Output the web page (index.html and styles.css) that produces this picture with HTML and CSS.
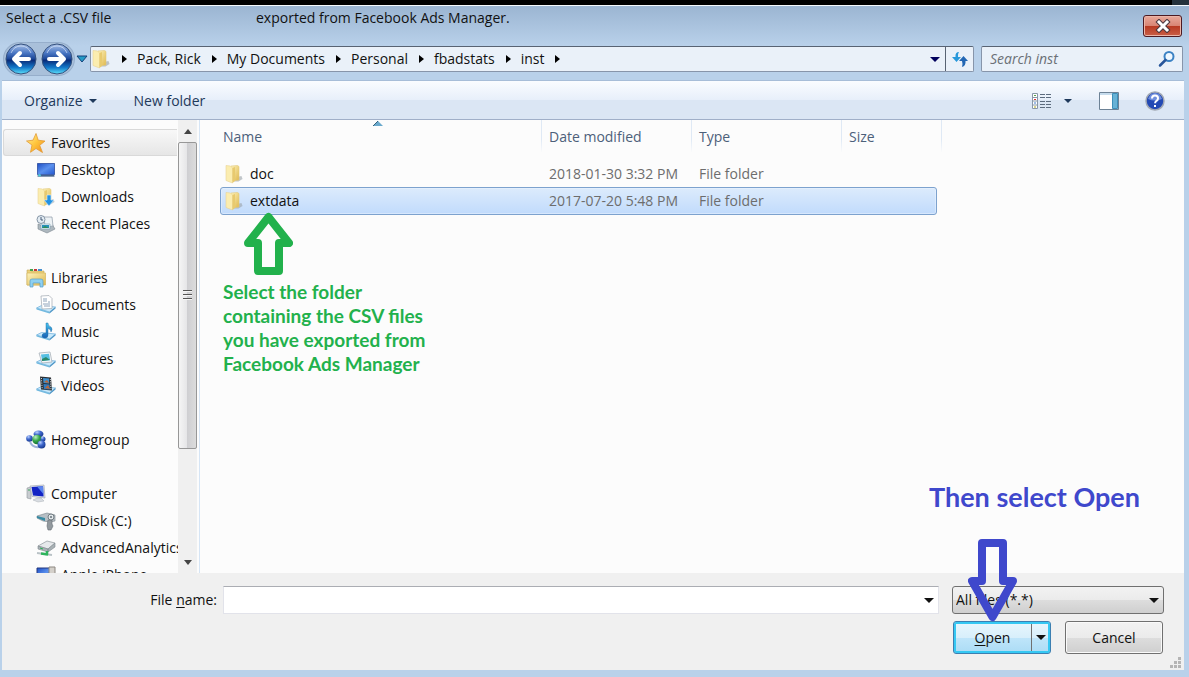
FILE: index.html
```html
<!DOCTYPE html>
<html lang="en">
<head>
<meta charset="utf-8">
<title>Select a .CSV file</title>
<link rel="stylesheet" href="styles.css">
</head>
<body>
<svg class="defs" aria-hidden="true">
  <defs>
    <linearGradient id="gold" x1="0" x2="1" y1="0" y2="1"><stop offset="0" stop-color="#fdf3bd"/><stop offset="1" stop-color="#dfb84e"/></linearGradient>
    <linearGradient id="orb" x1="0" x2="0" y1="0" y2="1"><stop offset="0" stop-color="#a9c1e6"/><stop offset=".3" stop-color="#4a77c4"/><stop offset=".5" stop-color="#1b4595"/><stop offset=".54" stop-color="#082a78"/><stop offset=".78" stop-color="#1377c8"/><stop offset="1" stop-color="#5ee3fb"/></linearGradient>
    <linearGradient id="screen" x1="0" x2="1" y1="0" y2="1"><stop offset="0" stop-color="#1e4ec4"/><stop offset=".5" stop-color="#5b91ee"/><stop offset="1" stop-color="#2458cf"/></linearGradient>
    <linearGradient id="aqua" x1="0" x2="0" y1="0" y2="1"><stop offset="0" stop-color="#49c4ee"/><stop offset="1" stop-color="#1660b4"/></linearGradient>
    <radialGradient id="ball" cx=".35" cy=".25" r=".8"><stop offset="0" stop-color="#b9d0ff"/><stop offset=".45" stop-color="#3f68cc"/><stop offset="1" stop-color="#153589"/></radialGradient>
    <radialGradient id="leaf" cx=".35" cy=".25" r=".8"><stop offset="0" stop-color="#b9f0c0"/><stop offset=".5" stop-color="#35a64a"/><stop offset="1" stop-color="#136b2c"/></radialGradient>
    <linearGradient id="star" x1="0" x2="1" y1="0" y2="1"><stop offset="0" stop-color="#fff3a0"/><stop offset=".5" stop-color="#ffc53c"/><stop offset="1" stop-color="#f08a1c"/></linearGradient>
  </defs>
  <symbol id="i-folder" viewBox="0 0 20 20">
    <path d="M13 13l4.500-1 1 3-4 2.500H10z" fill="#9aa2a8" opacity=".6"/>
    <path d="M7 2l6.500-.500 1.500 1V16L8 17z" fill="url(#gold)" stroke="#e3c97c" stroke-width=".6"/>
    <path d="M2 1.500L6.500 2 8.500 4v15L2 16.500z" fill="#fbedb0" stroke="#e9d494" stroke-width=".6"/>
    <path d="M8.500 4L11 3v14l-2.500 2z" fill="#e8ca6e"/>
  </symbol>
  <symbol id="i-star" viewBox="0 0 20 20"><path d="M10 .5l2.200 6.700 6.800.9-5.300 4.200 2.800 7.200-6.500-4-5.500 3.800 1.500-7.200L.5 8l6.500-.8z" fill="url(#star)" stroke="#e39a33" stroke-width=".8"/></symbol>
  <symbol id="i-desktop" viewBox="0 0 20 20"><path d="M1 3h18v14H1z" fill="#c4cad6"/><path d="M1.500 3.500h17v11h-17z" fill="url(#screen)" stroke="#27489c" stroke-width=".7"/><path d="M2 15h16v1.500H2z" fill="#46648d"/><circle cx="3.500" cy="15.300" r="1.300" fill="#4ec9d8"/></symbol>
  <symbol id="i-down" viewBox="0 0 20 20"><use href="#i-folder"/><path d="M11 8h4v5h3l-5 6-5-6h3z" fill="#2492e2" stroke="#dff2ff" stroke-width=".6"/></symbol>
  <symbol id="i-recent" viewBox="0 0 20 20">
    <path d="M2 10l5 2 9-2 3 5-8 4-9-4z" fill="#aeb8bf" stroke="#7b878e" stroke-width=".6"/>
    <path d="M8 3h8l1 9-8 1z" fill="#edf2f5" stroke="#8c9aa6" stroke-width=".7"/><path d="M5 10h9v5H5z" fill="#e5f3fa" stroke="#7b9db0" stroke-width=".6"/><path d="M6 11h7v3H6z" fill="#2790b9"/><path d="M6 14l3-2 4 2z" fill="#2f8d57"/><circle cx="5" cy="5.500" r="4" fill="#e3ecf3" stroke="#8796a6"/><path d="M5 3v3h2" fill="none" stroke="#445b76"/>
  </symbol>
  <symbol id="i-library" viewBox="0 0 20 20">
    <path d="M1 2h3l1 1h13v14H1z" fill="#ecd27c" stroke="#c7a957" stroke-width=".6"/><path d="M4 1h3v2H4z" fill="#43a64e"/><path d="M8 1h3v2H8z" fill="#c53939"/><path d="M12 1h4v2h-4z" fill="#4590cf"/>
    <path d="M1 5h18.500v12H1z" fill="url(#gold)" stroke="#d5b65c" stroke-width=".7"/><path d="M4 19v-6q0-2 2-2h9q2 0 2 2v6h-3v-4H7v4z" fill="#8fd0ef" stroke="#589fca" stroke-width=".7"/>
  </symbol>
  <symbol id="i-tray" viewBox="0 0 20 20"><path d="M.5 13l5-2.500 14 1.500-6 5z" fill="#c9e9fb" stroke="#69aedb" stroke-width=".7"/><path d="M.5 13v1.500l13 4V17z" fill="#72b9df"/><path d="M13.500 17v1.500l6-5V12z" fill="#4b94c5"/></symbol>
  <symbol id="i-doc" viewBox="0 0 20 20"><use href="#i-tray"/><path d="M5 1l8-.500 3 3v10L6 14z" fill="#fff" stroke="#a0a8b0" stroke-width=".7"/><path d="M7 4h4M7 6h4M12 7h2M7 9h7M8 11h6" stroke="#8fa4bb"/></symbol>
  <symbol id="i-music" viewBox="0 0 20 20"><use href="#i-tray"/><path d="M10 1h2q0 3 3 4 2 2 0 5 0-3-3-3.500V13q0 3-3 3t-3-2.500 4-2.500z" fill="url(#aqua)" stroke="#15609c" stroke-width=".4"/></symbol>
  <symbol id="i-pic" viewBox="0 0 20 20"><use href="#i-tray"/><path d="M3 4l11-1 2 10-10 1z" fill="#f5f7f9" stroke="#9fa8b0" stroke-width=".7"/><path d="M5 5.500l8-.7 1.200 6.500-8 .7z" fill="#56bfe2"/><path d="M6 10l4-2 4 3-8 1z" fill="#2a8768"/></symbol>
  <symbol id="i-video" viewBox="0 0 20 20"><use href="#i-tray"/><path d="M4 .5l11 1 1 13-11-1z" fill="#2b3035"/><path d="M7 2l6 .5.2 5L7.500 7z" fill="#398fd0"/><path d="M7.500 8l6 .4.400 5-6-.4z" fill="#2f7bc1"/><path d="M8 6l3-2 2 3zM9 12l3-3 2 4z" fill="#bd6736"/><path d="M5.400 2l.8 11M14.300 3l.7 11" stroke="#d9e1e8" stroke-dasharray="1 1.300"/></symbol>
  <symbol id="i-home" viewBox="0 0 20 20"><ellipse cx="12.500" cy="4" rx="5" ry="3.500" fill="url(#ball)"/><circle cx="3.500" cy="8.500" r="3.300" fill="url(#ball)"/><path d="M4 12q3 6 9 5" stroke="#9db2d8" stroke-width="2" fill="none"/><circle cx="11" cy="9.500" r="4.800" fill="url(#leaf)"/><circle cx="17" cy="9" r="2.500" fill="url(#ball)"/><circle cx="15.500" cy="14.500" r="4" fill="url(#ball)"/></symbol>
  <symbol id="i-computer" viewBox="0 0 20 20"><path d="M1 4l4-1v12l-4-1z" fill="#c8ccd0" stroke="#8e949b" stroke-width=".6"/><path d="M2 6h2" stroke="#39a35a"/><path d="M4 2l14-1 1 13-13-1.500z" fill="#e0e4ea" stroke="#9aa0a8" stroke-width=".6"/><path d="M5.500 3L17 2.200l.6 10.300L7 11.500z" fill="#1223c4"/><path d="M11 2.600l6-.4.500 8z" fill="#5c86ee"/><path d="M11 14h4l3 3-6 1-5-2z" fill="#d9dde2" stroke="#aab0b7" stroke-width=".5"/></symbol>
  <symbol id="i-disk" viewBox="0 0 20 20"><path d="M1 5l10-3 8 2v6l-5 1-7-1-6-3z" fill="#b7bfc5" stroke="#78838a" stroke-width=".6"/><path d="M1 5l8 2v3L1 7z" fill="#368aa3"/><path d="M12 9h4v4l1 2-2 4h-3l-1-4z" fill="#92999e" stroke="#656d73" stroke-width=".6"/><circle cx="15" cy="6" r="3" fill="#e2e7e9" stroke="#737d83"/><circle cx="15" cy="6" r="1" fill="#657078"/></symbol>
  <symbol id="i-net" viewBox="0 0 20 20"><path d="M2 8l9-5 8 2-7 6z" fill="#e6e9eb" stroke="#8e969b" stroke-width=".7"/><path d="M2 8v3l10 3V11zM12 11v3l7-5V5z" fill="#a9b1b5" stroke="#7e888d" stroke-width=".6"/><path d="M4 10l3 1" stroke="#29b253"/><path d="M1 15l15 2" stroke="#b9c2c6" stroke-width="2"/><path d="M5 15.500l7 1M11 13v4" stroke="#2eb35c" stroke-width="2.500"/></symbol>
  <symbol id="i-phone" viewBox="0 0 20 20"><path d="M1 3h15v12H1z" fill="url(#screen)" stroke="#25387e"/><path d="M13 2h6v15h-6z" fill="#d4d0ca" stroke="#8c8780"/></symbol>
</svg>

<div class="backdrop"><span></span></div>
<main class="dialog">
  <header class="titlebar">
    <h1><span class="title-start">Select a .CSV file</span><span>exported from Facebook Ads Manager.</span></h1>
    <button class="close" aria-label="Close"><svg viewBox="0 0 16 14"><path d="M4 3l8 8M12 3l-8 8" stroke="#4b3940" stroke-width="5" stroke-linecap="square"/><path d="M4 3l8 8M12 3l-8 8" stroke="#fff" stroke-width="3" stroke-linecap="square"/></svg></button>
  </header>

  <div class="nav">
    <div class="travel">
      <button aria-label="Back"><svg viewBox="0 0 32 32"><circle cx="16" cy="16" r="15" fill="url(#orb)" stroke="#34507c"/><path d="M6 10Q9 3 16 3t10 7" fill="none" stroke="#d6e3f6" opacity=".7"/><path d="M24 16H9M15 10l-6 6 6 6" fill="none" stroke="#fff" stroke-width="4" stroke-linecap="round" stroke-linejoin="round"/></svg></button>
      <button aria-label="Forward"><svg viewBox="0 0 32 32"><circle cx="16" cy="16" r="15" fill="url(#orb)" stroke="#34507c"/><path d="M6 10Q9 3 16 3t10 7" fill="none" stroke="#d6e3f6" opacity=".7"/><path d="M8 16h15M17 10l6 6-6 6" fill="none" stroke="#fff" stroke-width="4" stroke-linecap="round" stroke-linejoin="round"/></svg></button>
    </div>
    <button class="recent" aria-label="Recent locations"><svg viewBox="0 0 12 8"><path d="M1 1h10L6 7z" fill="#249cc7" stroke="#153f78"/></svg></button>
    <div class="address">
      <svg class="ico"><use href="#i-folder"/></svg>
      <ol class="crumbs">
        <li><a href="#">Pack, Rick</a></li><li><a href="#">My Documents</a></li><li><a href="#">Personal</a></li><li><a href="#">fbadstats</a></li><li><a href="#">inst</a></li><li></li>
      </ol>
      <button class="drop navy" aria-label="Previous locations"></button>
      <button class="refresh" aria-label="Refresh"><svg viewBox="0 0 18 18"><path d="M8 2Q4 2 4.500 7H1l4.500 5L10 7H7Q6.500 4 8 2z" fill="#2999db"/><path d="M11 17q4-1 3.500-6H17l-4.500-5L8 11h3q1 3 0 6z" fill="#2367b4"/></svg></button>
    </div>
    <label class="search"><input type="search" aria-label="Search inst" placeholder="Search inst"><svg viewBox="0 0 18 18"><circle cx="11" cy="6.500" r="4.500" fill="#eef7ff" stroke="#3b82c4" stroke-width="2"/><path d="M7.500 10L2 15.500" stroke="#28569b" stroke-width="2.500" stroke-linecap="round"/></svg></label>
  </div>

  <div class="toolbar">
    <button class="organize">Organize <i class="tri"></i></button>
    <button>New folder</button>
    <span class="spacer"></span>
    <button class="view" aria-label="Change your view"><svg viewBox="0 0 20 18"><path d="M1.500 1.500h5v15h-5zM1.500 5.500h5M1.500 9h5M1.500 13h5" fill="#fff" stroke="#8998a8"/><path d="M3 3.500h2" stroke="#57a34b"/><path d="M3 7.500h2" stroke="#d33"/><path d="M3 11h2" stroke="#3a78d0"/><path d="M3 15h2" stroke="#a8a51f"/><path d="M9 2.500h5m1 0h5M9 5.500h5m1 0h5M9 9.500h5m1 0h5M9 12.500h5m1 0h5M9 15.500h5m1 0h5" stroke="#5c6b7e"/></svg><i class="tri"></i></button>
    <button class="pane" aria-label="Show the preview pane"><svg viewBox="0 0 20 18"><path d="M.5.5h19v17H.5z" fill="#fff" stroke="#6d8296"/><path d="M1 1h18v2H1z" fill="#c6dced"/><path d="M13.500 1.500h5v15h-5z" fill="#67b2d6" stroke="#3e8fb9"/></svg></button>
    <button class="help" aria-label="Help"><svg viewBox="0 0 20 20"><circle cx="10" cy="10" r="9" fill="#2349b4" stroke="#a1a8b3" stroke-width="1.500"/><path d="M3 8q2-6 7-6t7 6q-7 3-14 0z" fill="#6f8edd"/><path d="M7 7.500q0-3 3-3t3 2.700q0 1.600-1.500 2.600-1.400 1-1.400 2.500M10 14v2" fill="none" stroke="#fff" stroke-width="2"/></svg></button>
  </div>

  <div class="content">
    <nav class="tree" aria-label="Locations">
      <ul>
        <li><a class="root current" href="#"><svg class="ico"><use href="#i-star"/></svg>Favorites</a>
          <ul><li><a href="#"><svg class="ico"><use href="#i-desktop"/></svg>Desktop</a></li><li><a href="#"><svg class="ico"><use href="#i-down"/></svg>Downloads</a></li><li><a href="#"><svg class="ico"><use href="#i-recent"/></svg>Recent Places</a></li></ul></li>
        <li><a class="root" href="#"><svg class="ico"><use href="#i-library"/></svg>Libraries</a>
          <ul><li><a href="#"><svg class="ico"><use href="#i-doc"/></svg>Documents</a></li><li><a href="#"><svg class="ico"><use href="#i-music"/></svg>Music</a></li><li><a href="#"><svg class="ico"><use href="#i-pic"/></svg>Pictures</a></li><li><a href="#"><svg class="ico"><use href="#i-video"/></svg>Videos</a></li></ul></li>
        <li><a class="root" href="#"><svg class="ico"><use href="#i-home"/></svg>Homegroup</a></li>
        <li><a class="root" href="#"><svg class="ico"><use href="#i-computer"/></svg>Computer</a>
          <ul><li><a href="#"><svg class="ico"><use href="#i-disk"/></svg>OSDisk (C:)</a></li><li><a href="#"><svg class="ico"><use href="#i-net"/></svg>AdvancedAnalytics</a></li><li><a href="#"><svg class="ico"><use href="#i-phone"/></svg>Apple iPhone</a></li></ul></li>
      </ul>
    </nav>
    <div class="scrollbar">
      <span class="arrow"><svg viewBox="0 0 8 5"><path d="M0 5l4-5 4 5z" fill="#444"/></svg></span>
      <div class="track"><div class="thumb"><i></i></div></div>
      <span class="arrow"><svg viewBox="0 0 8 5"><path d="M0 0l4 5 4-5z" fill="#444"/></svg></span>
    </div>
    <section class="list">
      <table>
        <thead><tr><th>Name<svg class="sort" viewBox="0 0 10 5"><path d="M0 5l5-5 5 5z" fill="#6aa9cc"/><path d="M0 5l5-5" stroke="#35617c"/></svg></th><th>Date modified</th><th>Type</th><th>Size</th></tr></thead>
        <tbody>
          <tr><td><svg class="ico"><use href="#i-folder"/></svg>doc</td><td>2018-01-30 3:32 PM</td><td>File folder</td><td></td></tr>
          <tr class="selected"><td><svg class="ico"><use href="#i-folder"/></svg>extdata</td><td>2017-07-20 5:48 PM</td><td>File folder</td><td></td></tr>
        </tbody>
      </table>
      <div class="note green">
        <svg viewBox="0 0 49 63"><path d="M24.500 5L45 31H35V59H14V31H4z"/></svg>
        <p>Select the folder<br>containing the CSV files<br>you have exported from<br>Facebook Ads Manager</p>
      </div>
    </section>
  </div>

  <footer>
    <div class="fields">
      <label for="file">File <u>n</u>ame:</label>
      <div class="combo"><input id="file" type="text"><button class="drop" aria-label="Recent file names"></button></div>
      <div class="filter"><select aria-label="File type"><option>All files (*.*)</option></select><i class="tri"></i></div>
    </div>
    <div class="actions">
      <div class="split"><button class="open"><span><u>O</u>pen</span></button><button class="drop" aria-label="More ways to open"></button></div>
      <button class="cancel">Cancel</button>
    </div>
    <div class="note blue">
      <p>Then select Open</p>
      <svg viewBox="0 0 49 83"><path d="M14 4H35V42H45L24.500 78L4 42H14z"/></svg>
    </div>
    <svg class="grip" viewBox="0 0 12 12"><path d="M8 0h3v3H8zM4 4h3v3H4zM8 4h3v3H8zM0 8h3v3H0zM4 8h3v3H4zM8 8h3v3H8z" fill="#b5b5b5"/></svg>
  </footer>
</main>
</body>
</html>
```
FILE: styles.css
```css
* { box-sizing: border-box; }
body {
  margin: 0; height: 100vh; display: flex; flex-direction: column; overflow: hidden;
  font: 14px/20px "Open Sans", "Noto Sans", sans-serif; color: #111;
}
button, input, select { font: inherit; color: inherit; border: 0; background: none; padding: 0; margin: 0; }
button { display: flex; align-items: center; justify-content: center; }
a { color: inherit; text-decoration: none; }
ul, ol { list-style: none; margin: 0; padding: 0; }
svg { display: block; flex: none; }
.defs { position: absolute; width: 0; height: 0; }
.ico { width: 20px; height: 20px; }
.spacer { flex: 1; }
.tri, .drop::after { content: ""; border: 4px solid transparent; border-top: 4px solid currentColor; border-bottom: 0; }
.drop::after { border-width: 5px 5px 0; }

.backdrop { height: 5px; flex: none; background: #000; display: flex; justify-content: flex-end; }
.backdrop span { width: 17px; background: #26323c; }
.dialog {
  flex: 1; min-height: 0; display: flex; flex-direction: column;
  padding: 0 5px 7px 2px; border-top: 1px solid #f5f9fd;
  background: linear-gradient(#9bb5d2, #b9d1ea 40px);
}
.titlebar { display: flex; justify-content: space-between; height: 36px; padding-left: 4px; flex: none; }
h1 { display: flex; margin: 2px 0 0; font-size: 14px; font-weight: 400; line-height: 20px; }
.title-start { width: 250px; }
.close {
  width: 39px; height: 22px; margin: 9px 2px 0 0; border: 1px solid #4d1a22; border-radius: 3px;
  box-shadow: inset 0 0 0 1px #ebb5a8;
  background: linear-gradient(#e9a99b, #d98574 48%, #b83a22 52%, #c95f48);
}
.close svg { width: 16px; height: 14px; }

.nav { display: flex; align-items: center; height: 38px; flex: none; padding-bottom: 4px; margin-right: 1px; }
.travel { display: flex; gap: 4px; margin: 0 1px 0 2px; padding: 0 1px; border-radius: 18px; background: #a9c0da; box-shadow: 0 0 0 1px #96aecb; }
.travel svg { width: 32px; height: 32px; }
.recent { width: 13px; margin-right: 2px; }
.recent svg { width: 12px; height: 8px; }
.address, .search {
  display: flex; align-items: center; height: 26px; background: #eaf1f9;
  border: 1px solid #8795aa; border-top-color: #586373; border-radius: 2px;
}
.address { flex: 1; margin-right: 7px; }
.crumbs { display: flex; flex: 1; }
.crumbs li { display: flex; align-items: center; }
.crumbs li::before { content: ""; margin: 0 10px 0 11px; border: 4px solid transparent; border-left: 5px solid #000; border-right: 0; }
.drop.navy { color: #00005c; width: 20px; }
.refresh { align-self: stretch; width: 28px; border-left: 1px solid #586373; }
.refresh svg { width: 18px; height: 18px; }
.search { width: 202px; padding: 0 6px 0 8px; }
.search input { flex: 1; min-width: 0; outline: 0; }
.search input::placeholder { color: #6b7076; font-style: italic; opacity: 1; }
.search svg { width: 18px; height: 18px; }

.toolbar {
  display: flex; align-items: center; height: 40px; flex: none; padding: 1px 19px 0 22px; color: #1e395b;
  border-top: 1px solid #a7bdd8; border-bottom: 1px solid #a0afc8;
  background: linear-gradient(#fafcff, #e7effa 50%, #dbe6f4 51%, #dbe6f4);
}
.toolbar > button { height: 36px; }
.organize { margin-right: 37px; gap: 6px; }
.view { gap: 13px; margin-right: 27px; }
.view svg, .pane svg { width: 20px; height: 18px; }
.pane { margin-right: 26px; }
.help svg { width: 20px; height: 20px; }

.content { flex: 1; min-height: 0; display: flex; background: #fcfcfc; }
.tree { width: 176px; overflow: hidden; padding: 9px 1px 0; flex: none; }
.tree a { display: flex; align-items: center; gap: 5px; height: 27px; padding-left: 33px; white-space: nowrap; }
.tree a.root { padding-left: 22px; border: 1px solid transparent; }
.tree > ul > li { margin-bottom: 27px; }
.tree a.current { border-color: #d9d9d9; border-right: 0; border-radius: 3px 0 0 3px; background: linear-gradient(#f8f8f8, #e6e6e6); }
.scrollbar { width: 19px; flex: none; display: flex; flex-direction: column; background: #f0f0f0; }
.arrow { height: 22px; display: flex; align-items: center; justify-content: center; }
.arrow svg { width: 8px; height: 5px; }
.track { flex: 1; }
.thumb { height: 75%; border: 1px solid #979797; border-radius: 2px; background: linear-gradient(90deg, #f5f5f5, #e6e6e8 45%, #cfcfd2 50%, #dcdcdc); display: flex; align-items: center; justify-content: center; }
.thumb i { width: 9px; height: 11px; background: repeating-linear-gradient(#555 0 1px, #f5f5f5 1px 2px, transparent 2px 4px); }

.list { flex: 1; min-width: 0; position: relative; margin-left: 2px; border-left: 1px solid #d6e5f5; padding-left: 21px; }
table, thead, tbody { display: block; }
table { max-width: 721px; }
tr { display: grid; grid-template-columns: 321px 150px 150px 1fr; }
th {
  position: relative; height: 32px; padding: 7px 0 0 7px; text-align: left; font-weight: 400; color: #4c607a;
  border-right: 1px solid; border-image: linear-gradient(#dfe9f5 60%, #fcfcfc) 1;
}
th:first-child { padding-left: 2px; }
.sort { position: absolute; top: 1px; left: 152px; width: 10px; height: 5px; }
tbody { padding: 8px 5px 0 0; margin-left: -1px; }
tbody tr { height: 27px; align-items: center; border: 1px solid transparent; border-radius: 3px; }
td { padding: 0 0 0 7px; color: #6d6d6d; }
td:first-child { display: flex; align-items: center; gap: 6px; padding-left: 3px; color: #111; }
tbody tr.selected { height: 28px; border-color: #7da2ce; background: linear-gradient(#dcebfc, #c1dbfc); box-shadow: inset 0 0 0 1px #ebf4fd80; }

.note { position: absolute; font-family: Lato, "Open Sans", sans-serif; font-weight: 700; pointer-events: none; }
.note p { margin: 0; }
.note path { fill: none; stroke: currentColor; stroke-width: 8; stroke-linejoin: round; }
.green { left: 23px; top: 92px; font-size: 19px; line-height: 24px; color: #22b14c; }
.green svg { width: 49px; height: 63px; margin: 0 0 5px 21px; }
.blue { right: 44px; bottom: 48px; font-size: 27px; line-height: 32px; color: #3f48cc; }
.blue svg { width: 49px; height: 83px; margin: 26px 123px 0 auto; }

footer { position: relative; flex: none; padding: 13px 20px 16px 0; background: #f0f0f0; }
.fields, .actions { display: flex; align-items: center; }
.fields label { width: 215px; text-align: right; margin-right: 6px; }
u { text-underline-offset: 2px; }
.combo { flex: 1; display: flex; height: 28px; margin-right: 13px; background: #fff; border: 1px solid #e2e3ea; border-top-color: #abadb3; }
.combo input { flex: 1; min-width: 0; padding: 0 4px; outline: 0; }
.combo .drop { width: 18px; }
.filter { position: relative; width: 212px; height: 28px; }
.filter select { appearance: none; width: 100%; height: 28px; padding: 0 20px 0 3px; border: 1px solid #707070; border-radius: 3px; background: linear-gradient(#f2f2f2, #ebebeb 50%, #dddddd 51%, #cfcfcf); }
.filter .tri { position: absolute; right: 5px; top: 12px; border-width: 5px 5px 0; }
.actions { justify-content: flex-end; gap: 14px; margin: 7px 1px 0 0; }
.split, .cancel { height: 33px; width: 98px; border-radius: 3px; }
.split { display: flex; border: 1px solid #3c7fb1; box-shadow: inset 0 0 0 2px #35c8f3; background: linear-gradient(#e8f6fd, #d8effb 50%, #bfe5fa 51%, #abdcf5); }
.open { flex: 1; }
.split .drop { width: 19px; margin: 2px 0; border-left: 1px solid #707070; }
.cancel { border: 1px solid #707070; box-shadow: inset 0 0 0 1px #fafafa; background: linear-gradient(#f2f2f2, #ebebeb 50%, #dddddd 51%, #cfcfcf); }
.grip { position: absolute; right: 2px; bottom: 1px; width: 12px; height: 12px; }
```
